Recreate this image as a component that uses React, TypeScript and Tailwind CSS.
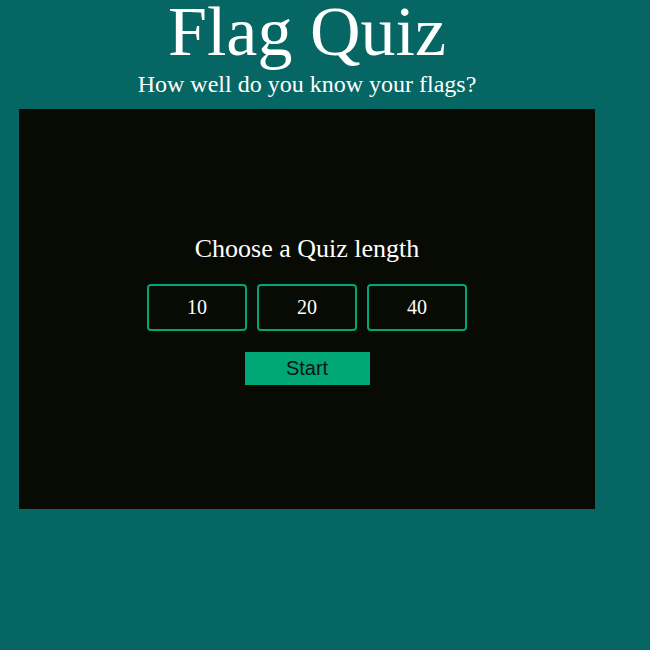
import React from 'react';

const lengths = [10, 20, 40];

export default function App() {
    return (
        <div className="min-h-screen w-full bg-[#056664]" style={{ fontFamily: '"Liberation Serif", "Times New Roman", serif' }}>
            <div className="w-[614px] flex flex-col items-center text-white">
                <h1 className="text-[70px] leading-[63px] font-normal">Flag Quiz</h1>
                <p className="mt-[7px] text-[24px] leading-[28px]">How well do you know your flags?</p>

                {/* Quiz panel */}
                <div className="mt-[11px] w-[576px] h-[400px] bg-[#080a04] flex flex-col items-center justify-center">
                    <h2 className="text-[26px] leading-[30px] font-normal">Choose a Quiz length</h2>
                    <div className="mt-[20px] flex gap-[10px]">
                        {lengths.map((n) => (
                            <button
                                key={n}
                                className="w-[100px] h-[47px] border-2 border-[#00a676] rounded-[4px] text-[20px] text-white bg-transparent"
                            >
                                {n}
                            </button>
                        ))}
                    </div>
                    <button
                        className="mt-[21px] w-[125px] h-[33px] bg-[#00a676] text-[20px] text-[#0b1410]"
                        style={{ fontFamily: '"Liberation Sans", Arial, sans-serif' }}
                    >
                        Start
                    </button>
                </div>
            </div>
        </div>
    );
}
